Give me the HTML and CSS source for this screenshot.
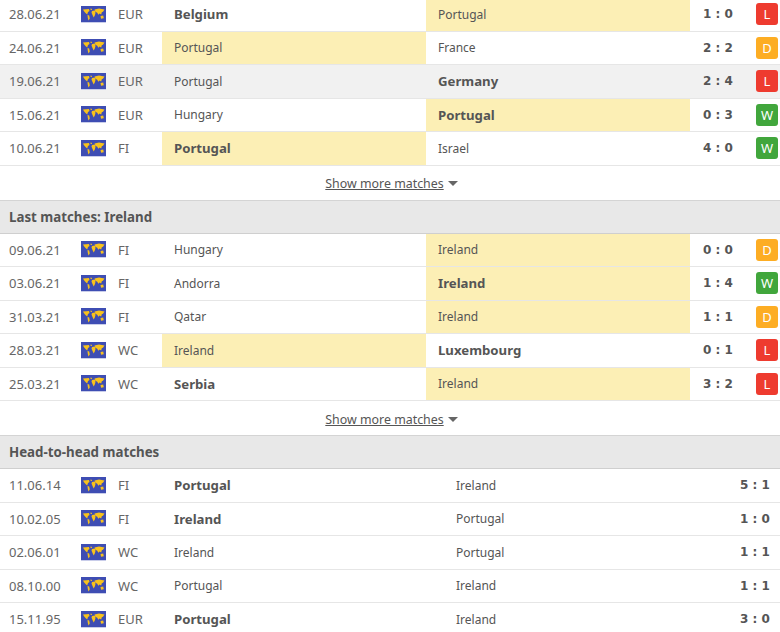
FILE: index.html
```html
<!DOCTYPE html>
<html lang="en">
<head>
<meta charset="utf-8">
<title>Portugal vs Ireland</title>
<link rel="stylesheet" href="styles.css">
</head>
<body>
<svg class="defs" width="0" height="0" aria-hidden="true">
  <symbol id="world" viewBox="0 0 25 17">
    <rect width="25" height="17" fill="#3e4db3"/>
    <rect y="16" width="25" height="1" fill="#c9cdea"/>
    <path fill="#f8c21c" d="M2 3.500 8 3 8.500 5 7 6 6.200 8.500 4.500 7 3 5.200Z M6.500 9 8.200 9.500 8.800 12.500 7.500 14.500 6.800 12Z M9.500 2.500 11.200 3 10.500 4.200 9.500 3.800Z M11 5 13.800 4.500 14.500 7 13.800 9.500 12.700 11.500 11.500 9 10.500 6.500Z M13.500 3.500 18 2.500 23.500 3.500 22 5.800 20.800 6.200 20.200 8.500 18.500 7.500 17.500 8.800 16 6.500 14.500 6 14 4.500Z M19.500 10 22.200 9.500 22.800 12.200 20 12.800Z"/>
  </symbol>
</svg>
<main class="page">
  <div class="row"><span class="date">28.06.21</span><svg class="flag"><use href="#world"/></svg><span class="comp">EUR</span><span class="team win">Belgium</span><span class="team hl">Portugal</span><span class="score">1 : 0</span><span class="res l">L</span></div>
  <div class="row"><span class="date">24.06.21</span><svg class="flag"><use href="#world"/></svg><span class="comp">EUR</span><span class="team hl">Portugal</span><span class="team">France</span><span class="score">2 : 2</span><span class="res d">D</span></div>
  <div class="row shade"><span class="date">19.06.21</span><svg class="flag"><use href="#world"/></svg><span class="comp">EUR</span><span class="team">Portugal</span><span class="team win">Germany</span><span class="score">2 : 4</span><span class="res l">L</span></div>
  <div class="row"><span class="date">15.06.21</span><svg class="flag"><use href="#world"/></svg><span class="comp">EUR</span><span class="team">Hungary</span><span class="team win hl">Portugal</span><span class="score">0 : 3</span><span class="res w">W</span></div>
  <div class="row"><span class="date">10.06.21</span><svg class="flag"><use href="#world"/></svg><span class="comp">FI</span><span class="team win hl">Portugal</span><span class="team">Israel</span><span class="score">4 : 0</span><span class="res w">W</span></div>
  <div class="more"><a class="more-link" href="#">Show more matches</a><span class="caret"></span></div>
  <h2 class="head">Last matches: Ireland</h2>
  <div class="row"><span class="date">09.06.21</span><svg class="flag"><use href="#world"/></svg><span class="comp">FI</span><span class="team">Hungary</span><span class="team hl">Ireland</span><span class="score">0 : 0</span><span class="res d">D</span></div>
  <div class="row"><span class="date">03.06.21</span><svg class="flag"><use href="#world"/></svg><span class="comp">FI</span><span class="team">Andorra</span><span class="team win hl">Ireland</span><span class="score">1 : 4</span><span class="res w">W</span></div>
  <div class="row"><span class="date">31.03.21</span><svg class="flag"><use href="#world"/></svg><span class="comp">FI</span><span class="team">Qatar</span><span class="team hl">Ireland</span><span class="score">1 : 1</span><span class="res d">D</span></div>
  <div class="row"><span class="date">28.03.21</span><svg class="flag"><use href="#world"/></svg><span class="comp">WC</span><span class="team hl">Ireland</span><span class="team win">Luxembourg</span><span class="score">0 : 1</span><span class="res l">L</span></div>
  <div class="row"><span class="date">25.03.21</span><svg class="flag"><use href="#world"/></svg><span class="comp">WC</span><span class="team win">Serbia</span><span class="team hl">Ireland</span><span class="score">3 : 2</span><span class="res l">L</span></div>
  <div class="more"><a class="more-link" href="#">Show more matches</a><span class="caret"></span></div>
  <h2 class="head">Head-to-head matches</h2>
  <div class="row h2h"><span class="date">11.06.14</span><svg class="flag"><use href="#world"/></svg><span class="comp">FI</span><span class="team win">Portugal</span><span class="team">Ireland</span><span class="score">5 : 1</span></div>
  <div class="row h2h"><span class="date">10.02.05</span><svg class="flag"><use href="#world"/></svg><span class="comp">FI</span><span class="team win">Ireland</span><span class="team">Portugal</span><span class="score">1 : 0</span></div>
  <div class="row h2h"><span class="date">02.06.01</span><svg class="flag"><use href="#world"/></svg><span class="comp">WC</span><span class="team">Ireland</span><span class="team">Portugal</span><span class="score">1 : 1</span></div>
  <div class="row h2h"><span class="date">08.10.00</span><svg class="flag"><use href="#world"/></svg><span class="comp">WC</span><span class="team">Portugal</span><span class="team">Ireland</span><span class="score">1 : 1</span></div>
  <div class="row h2h"><span class="date">15.11.95</span><svg class="flag"><use href="#world"/></svg><span class="comp">EUR</span><span class="team win">Portugal</span><span class="team">Ireland</span><span class="score">3 : 0</span></div>
</main>
</body>
</html>
```
FILE: styles.css
```css
html, body {
  margin: 0;
  padding: 0;
  height: 632px;
  overflow: hidden;
  background: #fff;
}
.defs { display: block; height: 0; }
.page {
  margin-top: -2px;
  width: 780px;
  font-family: "Noto Sans", "Open Sans", sans-serif;
  font-size: 13px;
  color: #555;
}
.row {
  display: grid;
  grid-template-columns: 81px 36px 45px 264px 264px 56px 34px;
  align-items: center;
  height: 33.5px;
  box-sizing: border-box;
  border-bottom: 1.5px solid #e6e6e6;
}
.row.h2h { grid-template-columns: 81px 36px 45px 282px 286px 50px; }
.row.shade { background: #f1f1f1; }
.date { padding-left: 9px; color: #666; }
.flag { width: 25px; height: 17px; display: block; }
.comp { color: #666; padding-left: 1px; }
.team {
  align-self: stretch;
  display: flex;
  align-items: center;
  padding-left: 12px;
  font-size: 12px;
}
.team.win { font-weight: 700; font-size: 13.2px; }
.team.hl { background: #fcefb5; }
.score {
  font-family: "DejaVu Sans", sans-serif;
  font-size: 12px;
  font-weight: 700;
  text-align: center;
}
.res {
  justify-self: start;
  margin-left: 10px;
  width: 22px;
  height: 22px;
  border-radius: 3px;
  color: #fff;
  display: flex;
  align-items: center;
  justify-content: center;
  font-size: 13px;
}
.res.l { background: #ee3b2f; }
.res.d { background: #fdad23; }
.res.w { background: #41a63c; }
.more {
  height: 34px;
  padding-top: 2px;
  padding-left: 3px;
  display: flex;
  align-items: center;
  justify-content: center;
  gap: 4px;
  box-sizing: border-box;
  font-size: 12.4px;
}
.more-link { color: #555; text-decoration: underline; }
.caret {
  width: 0;
  height: 0;
  border-left: 5px solid transparent;
  border-right: 5px solid transparent;
  border-top: 5px solid #666;
}
.head {
  margin: 0;
  height: 34px;
  box-sizing: border-box;
  padding-left: 9px;
  display: flex;
  align-items: center;
  font-size: 13.3px;
  font-weight: 700;
  color: #555;
  background: #e8e8e8;
  border-top: 1.5px solid #d4d4d4;
  border-bottom: 1.5px solid #cfcfcf;
}
```
